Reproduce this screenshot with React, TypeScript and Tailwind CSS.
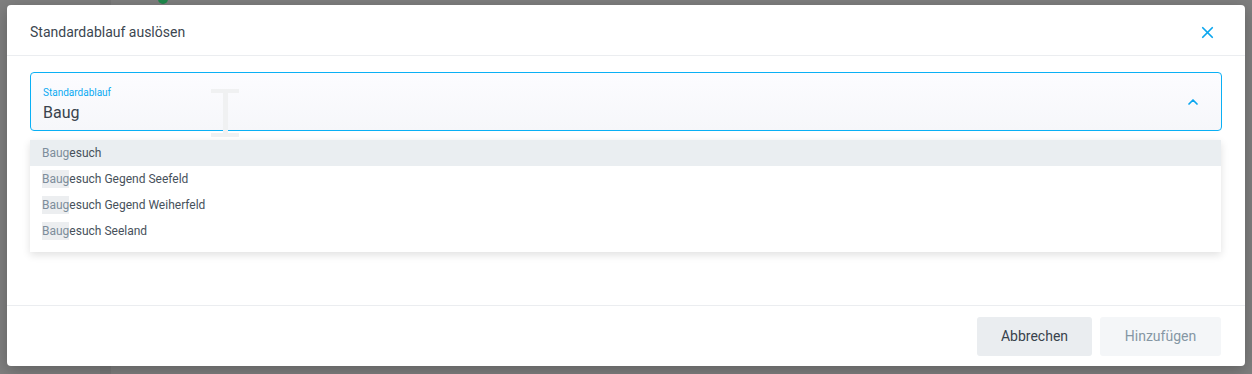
import { X, ChevronUp } from "lucide-react"

const options = [
  "Baugesuch",
  "Baugesuch Gegend Seefeld",
  "Baugesuch Gegend Weiherfeld",
  "Baugesuch Seeland",
]

export default function App() {
  const query = "Baug"
  return (
    <div className="relative h-[374px] w-[1252px] overflow-hidden bg-[#7f7f7f] font-['Roboto',sans-serif]">
      {/* faint page behind the overlay */}
      <div className="absolute left-[100px] top-0 h-full w-[11px] bg-[#787878]" />
      <div className="absolute left-[158px] top-[-6px] h-[10px] w-[10px] rounded-full bg-[#1f8a4c]" />

      <div className="absolute left-[7px] top-[5px] flex h-[361px] w-[1238px] flex-col rounded-[4px] bg-white shadow-[0_4px_16px_rgba(0,0,0,0.25)]">
        <div className="flex h-[51px] shrink-0 items-center justify-between border-b border-[#ebedf0] pl-[23px] pr-[28px] pt-[4px]">
          <h2 className="text-[14px] text-[#3c4650]">Standardablauf auslösen</h2>
          <X className="h-[19px] w-[19px] text-[#0aa6ef]" strokeWidth={2.2} />
        </div>

        <div className="relative flex-1 px-[23px] pt-[16px]">
          <div className="flex h-[59px] items-center justify-between rounded-[4px] border border-[#0ab0f5] bg-gradient-to-b from-[#fcfcff] to-[#f6f7fa] pl-[12px] pr-[20px]">
            <div className="flex flex-col pt-[6px]">
              <span className="text-[10px] leading-[12px] text-[#0aaaf2]">Standardablauf</span>
              <span className="mt-[4px] text-[16px] leading-[20px] text-[#39434d]">{query}</span>
            </div>
            <ChevronUp className="h-[16px] w-[16px] text-[#0aa6ef]" strokeWidth={2.6} />
          </div>

          <ul className="absolute left-[23px] right-[24px] top-[84px] bg-white pb-[8px] shadow-[0_3px_8px_rgba(0,0,0,0.12)]">
            {options.map((o, i) => (
              <li
                key={o}
                className={`flex h-[26px] items-center pl-[12px] text-[12px] text-[#47515b] ${i === 0 ? "bg-[#eaeef1]" : ""}`}
              >
                <span className={`text-[#7d8d9b] ${i === 0 ? "" : "bg-[#eceef0]"}`}>{o.slice(0, query.length)}</span>
                <span>{o.slice(query.length)}</span>
              </li>
            ))}
          </ul>

          {/* text cursor */}
          <div className="pointer-events-none absolute left-[204px] top-[33px] flex h-[48px] w-[28px] flex-col items-center">
            <div className="h-[4px] w-[28px] bg-[#f0f1f2]" />
            <div className="w-[5px] flex-1 bg-[#f0f1f2]" />
            <div className="h-[4px] w-[28px] bg-[#f0f1f2]" />
          </div>
        </div>

        <div className="flex h-[61px] shrink-0 items-center justify-end gap-[8px] border-t border-[#ebedf0] pr-[24px]">
          <button className="h-[39px] w-[115px] rounded-[3px] bg-[#eaedf0] text-[14px] text-[#38424c]">Abbrechen</button>
          <button className="h-[39px] w-[121px] rounded-[3px] bg-[#f4f6f8] text-[14px] text-[#8596a4]">Hinzufügen</button>
        </div>
      </div>
    </div>
  )
}
